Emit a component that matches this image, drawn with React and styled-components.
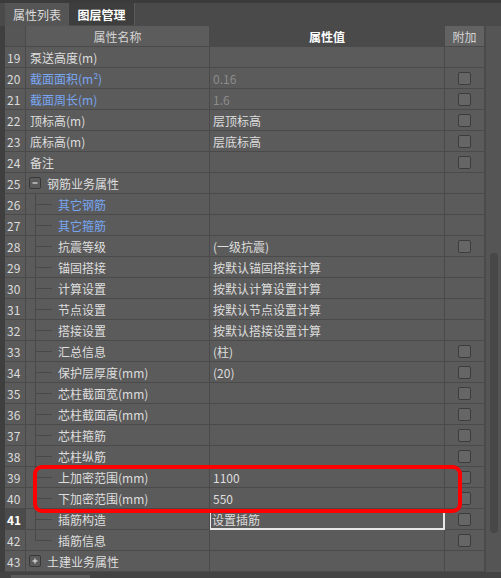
import React from "react";
import styled, { createGlobalStyle } from "styled-components";

const Global = createGlobalStyle`
  html, body { margin: 0; padding: 0; background: #3f3f3f; }
  body { font-family: "Noto Sans CJK SC", "Noto Sans", sans-serif; font-size: 12px; }
`;

const Frame = styled.div`
  position: relative;
  width: 501px;
  height: 578px;
  display: flex;
  flex-direction: column;
  background: #3f3f3f;
  overflow: hidden;
`;

const TabBar = styled.div`
  height: 26px;
  box-sizing: border-box;
  display: flex;
  align-items: flex-end;
  padding-left: 5px;
  background: #4a4a4a;
  border-top: 3px solid #3b3b3b;
`;

const Tab = styled.div`
  height: ${(p) => (p.$active ? "23px" : "22px")};
  align-self: ${(p) => (p.$active ? "flex-end" : "flex-start")};
  box-sizing: border-box;
  display: flex;
  align-items: center;
  justify-content: center;
  width: ${(p) => (p.$active ? "64px" : "66px")};
  background: ${(p) => (p.$active ? "#555555" : "#3e3e3e")};
  color: ${(p) => (p.$active ? "#dcdcdc" : "#ffffff")};
  font-weight: ${(p) => (p.$active ? 400 : 700)};
  border-right: ${(p) => (p.$active ? "none" : "1px solid #5a5a5a")};
  font-size: 12px;
`;

const Main = styled.div`
  display: flex;
  flex: 1;
  min-height: 0;
`;

const Table = styled.div`
  display: flex;
  flex-direction: column;
  padding-left: 5px;
  background: #3f3f3f;
`;

const Row = styled.div`
  display: grid;
  grid-template-columns: 21px 184px 235px 40px;
  height: 21px;
`;

const Cell = styled.div`
  box-sizing: border-box;
  height: 21px;
  display: flex;
  align-items: center;
  border-right: 1px solid #4a4a4a;
  border-bottom: 1px solid #4a4a4a;
  background: #5b5b5b;
  color: #dedede;
  white-space: nowrap;
  overflow: hidden;
`;

const HeadCell = styled(Cell)`
  justify-content: center;
  background: ${(p) => p.$bg};
  color: ${(p) => (p.$strong ? "#ffffff" : "#d4d4d4")};
  font-weight: ${(p) => (p.$strong ? 700 : 400)};
`;

const NumCell = styled(Cell)`
  padding-left: 2px;
  background: ${(p) => (p.$selected ? "#4b4b4b" : "#5a5a5a")};
  color: ${(p) => (p.$selected ? "#ffffff" : "#dcdcdc")};
  font-weight: ${(p) => (p.$selected ? 700 : 400)};
`;

const NameCell = styled(Cell)`
  padding-left: ${(p) => p.$pad}px;
  position: relative;
  color: ${(p) => (p.$blue ? "#78a6f2" : "#dedede")};
`;

const ValueCell = styled(Cell)`
  padding-left: ${(p) => (p.$editing ? "1px" : "3px")};
  color: ${(p) => (p.$muted ? "#8c8c8c" : "#dedede")};
  ${(p) => (p.$editing ? "border: 2px solid #e8e8e8; margin-left: -1px; width: calc(100% + 1px);" : "")}
`;

const AttachCell = styled(Cell)`
  justify-content: center;
`;

const Check = styled.span`
  width: 13px;
  height: 13px;
  box-sizing: border-box;
  border: 1px solid #3c3c3c;
  border-radius: 2px;
  background: #666666;
`;

const ToggleBox = styled.span`
  width: 12px;
  height: 12px;
  box-sizing: border-box;
  border: 1px solid #383838;
  border-radius: 2px;
  background: #5b5b5b;
  display: flex;
  align-items: center;
  justify-content: center;
  margin-right: 6px;
  flex: none;
`;

const Branch = styled.svg`
  position: absolute;
  left: 0;
  top: 0;
`;

const Scrollbar = styled.div`
  width: 16px;
  background: #555555;
  border-left: 1px solid #4a4a4a;
  box-sizing: border-box;
  padding-top: 227px;
  display: flex;
  justify-content: center;
`;

const Thumb = styled.div`
  width: 8px;
  height: 280px;
  border-radius: 4px;
  background: #474747;
`;

const BottomBar = styled.div`
  height: 6px;
  background: #434343;
  padding-left: 11px;
  display: flex;
  align-items: flex-end;
`;

const HThumb = styled.div`
  width: 79px;
  height: 3px;
  background: #5a5a5a;
`;

const Highlight = styled.div`
  position: absolute;
  left: 33px;
  top: 465px;
  width: 429px;
  height: 48px;
  box-sizing: border-box;
  border: 4px solid #ff0000;
  border-radius: 9px;
  pointer-events: none;
`;

const rows = [
  { n: 19, name: "泵送高度(m)" },
  { n: 20, name: "截面面积(m²)", blue: true, value: "0.16", muted: true, cb: true },
  { n: 21, name: "截面周长(m)", blue: true, value: "1.6", muted: true, cb: true },
  { n: 22, name: "顶标高(m)", value: "层顶标高", cb: true },
  { n: 23, name: "底标高(m)", value: "层底标高", cb: true },
  { n: 24, name: "备注", cb: true },
  { n: 25, name: "钢筋业务属性", group: "minus" },
  { n: 26, name: "其它钢筋", child: true, blue: true },
  { n: 27, name: "其它箍筋", child: true, blue: true },
  { n: 28, name: "抗震等级", child: true, value: "(一级抗震)", cb: true },
  { n: 29, name: "锚固搭接", child: true, value: "按默认锚固搭接计算" },
  { n: 30, name: "计算设置", child: true, value: "按默认计算设置计算" },
  { n: 31, name: "节点设置", child: true, value: "按默认节点设置计算" },
  { n: 32, name: "搭接设置", child: true, value: "按默认搭接设置计算" },
  { n: 33, name: "汇总信息", child: true, value: "(柱)", cb: true },
  { n: 34, name: "保护层厚度(mm)", child: true, value: "(20)", cb: true },
  { n: 35, name: "芯柱截面宽(mm)", child: true, cb: true },
  { n: 36, name: "芯柱截面高(mm)", child: true, cb: true },
  { n: 37, name: "芯柱箍筋", child: true, cb: true },
  { n: 38, name: "芯柱纵筋", child: true, cb: true },
  { n: 39, name: "上加密范围(mm)", child: true, value: "1100", cb: true },
  { n: 40, name: "下加密范围(mm)", child: true, value: "550", cb: true },
  { n: 41, name: "插筋构造", child: true, value: "设置插筋", cb: true, selected: true },
  { n: 42, name: "插筋信息", child: true, cb: true, last: true },
  { n: 43, name: "土建业务属性", group: "plus" },
];

function BranchLines({ last }) {
  return (
    <Branch width="30" height="21" viewBox="0 0 30 21">
      <line x1="9.5" y1="0" x2="9.5" y2={last ? 10.5 : 21} stroke="#484848" strokeWidth="1" />
      <line x1="10" y1="10.5" x2="26" y2="10.5" stroke="#484848" strokeWidth="1" />
    </Branch>
  );
}

function Toggle({ kind }) {
  return (
    <ToggleBox>
      <svg width="8" height="8" viewBox="0 0 8 8">
        <line x1="1.5" y1="4" x2="6.5" y2="4" stroke="#e0e0e0" strokeWidth="1.2" />
        {kind === "plus" && <line x1="4" y1="1.5" x2="4" y2="6.5" stroke="#e0e0e0" strokeWidth="1.2" />}
      </svg>
    </ToggleBox>
  );
}

function PropRow({ r }) {
  const pad = r.group ? 3 : r.child ? 32 : 4;
  return (
    <Row>
      <NumCell $selected={r.selected}>{r.n}</NumCell>
      <NameCell $pad={pad} $blue={r.blue}>
        {r.child && <BranchLines last={r.last} />}
        {r.group && <Toggle kind={r.group} />}
        {r.name}
      </NameCell>
      <ValueCell $muted={r.muted} $editing={r.selected}>{r.value || ""}</ValueCell>
      <AttachCell>{r.cb && <Check />}</AttachCell>
    </Row>
  );
}

export default function App() {
  return (
    <>
      <Global />
      <Frame>
        <TabBar>
          <Tab $active>属性列表</Tab>
          <Tab>图层管理</Tab>
        </TabBar>
        <Main>
          <Table>
            <Row>
              <HeadCell $bg="#565656" />
              <HeadCell $bg="#5c5c5c">属性名称</HeadCell>
              <HeadCell $bg="#4a4a4a" $strong>属性值</HeadCell>
              <HeadCell $bg="#626262">附加</HeadCell>
            </Row>
            {rows.map((r) => (
              <PropRow key={r.n} r={r} />
            ))}
          </Table>
          <Scrollbar>
            <Thumb />
          </Scrollbar>
        </Main>
        <BottomBar>
          <HThumb />
        </BottomBar>
        <Highlight />
      </Frame>
    </>
  );
}
